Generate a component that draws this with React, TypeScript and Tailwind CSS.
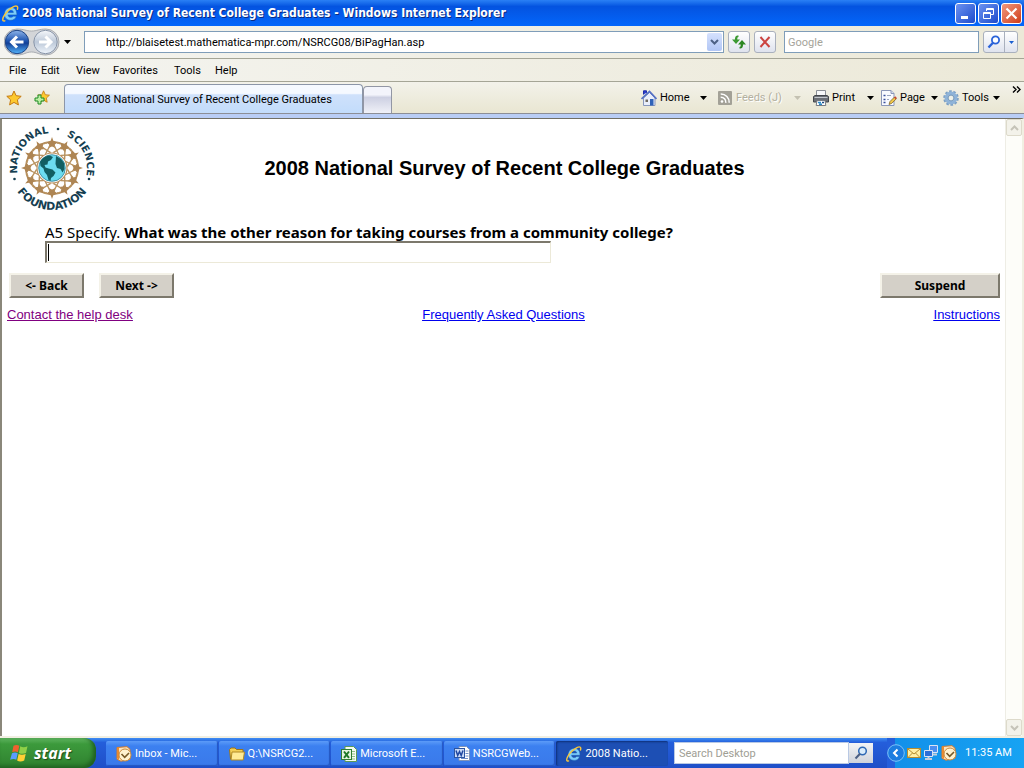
import React from 'react';
import { clsx } from 'clsx';

const menus = [
  { label: 'File', width: 'w-8' },
  { label: 'Edit', width: 'w-[35px]' },
  { label: 'View', width: 'w-[37px]' },
  { label: 'Favorites', width: 'w-[61px]' },
  { label: 'Tools', width: 'w-[41px]' },
  { label: 'Help', width: 'w-10' },
];

const IeLogo = ({ size = 16 }: { size?: number }) => (
  <svg width={size} height={size} viewBox="0 0 16 16" className="shrink-0" aria-hidden="true">
    <path d="M14 9.300H5.600c.2 1.500 1.200 2.300 2.700 2.300 1 0 1.800-.4 2.200-1.100h3c-.7 2.500-2.600 3.900-5.300 3.900-3.600 0-5.900-2.200-5.900-5.800 0-3.700 2.400-6.200 6.100-6.200 3.600 0 5.700 2.400 5.600 6.900zM5.700 7h5c-.1-1.300-1-2-2.400-2-1.400 0-2.300.7-2.600 2z" fill="#7cccfa" stroke="#1c5fae" strokeWidth=".5" />
    <path d="M2.600 14.900C.6 15.600.2 13.800 1.400 11.200 3 7.700 7.500 3 11.400 1.300c2.600-1.100 4 .1 3.100 2.700" fill="none" stroke="#f7c53b" strokeWidth="1.400" strokeLinecap="round" />
  </svg>
);

const Caret = ({ color = '#000' }: { color?: string }) => (
  <svg width="7" height="4" viewBox="0 0 7 4" className="shrink-0" aria-hidden="true">
    <path d="M0 0h7L3.500 4z" fill={color} />
  </svg>
);

const OutlookIcon = () => (
  <svg width="16" height="16" viewBox="0 0 16 16" aria-hidden="true">
    <path d="M1 1.500 11 .7l3 2.500v10l-9 2-4-2z" fill="#fbe3bd" stroke="#d67b28" />
    <path d="M1 1.500h2v12.500l-2-2z" fill="#e98a2f" />
    <circle cx="9" cy="9" r="6" fill="#fff3d0" stroke="#c98a3c" />
    <path d="M5.500 8l3.200 3.300L13 7" fill="none" stroke="#775a28" strokeWidth="1.600" />
  </svg>
);

const FolderIcon = () => (
  <svg width="16" height="16" viewBox="0 0 16 16" aria-hidden="true">
    <path d="M.5 3.500 2 2h4l1.500 1.500h6.500V13H1.500z" fill="#f3cf56" stroke="#9c7418" />
    <path d="M3 6h12.500l-1.300 8H2z" fill="#ffeb95" stroke="#b18a24" />
  </svg>
);

const ExcelIcon = () => (
  <svg width="16" height="16" viewBox="0 0 16 16" aria-hidden="true">
    <path d="M4 .5h8.500l3 3v12H4z" fill="#f4fbf2" stroke="#5d9a56" />
    <path d="M10 5.500h4M10 8h4M10 10.500h4M10 13h4" stroke="#8dbd83" />
    <rect x=".5" y="3.500" width="10" height="10" fill="#e7f5e1" stroke="#2e7d32" />
    <path d="M3 5.500l5 6.300M8 5.500l-5 6.300" stroke="#1f7a28" strokeWidth="2" />
  </svg>
);

const WordIcon = () => (
  <svg width="16" height="16" viewBox="0 0 16 16" aria-hidden="true">
    <path d="M5 .5h7.500l3 3v11H5z" fill="#fff" stroke="#8094b8" />
    <path d="M11.500 5h3M11.500 7.500h3M11.500 10h3M7 12.500h7" stroke="#6d8dc8" />
    <rect x=".5" y="2.500" width="10" height="9" fill="#c9daf8" stroke="#2c55a2" />
    <path d="M2 4.500l1.700 5L5.500 5.500l1.700 4L9 4.500" fill="none" stroke="#1f47a0" strokeWidth="1.500" />
  </svg>
);

const HomeIcon = () => (
  <svg width="16" height="16" viewBox="0 0 16 16" aria-hidden="true">
    <path d="M2.500 8v7.500h11.500V8L8.500 2.500z" fill="#e9eefa" stroke="#8796bc" />
    <path d="M2.500 4.500V.8h3v2" fill="#2a3bd0" stroke="#1d2ca5" />
    <path d="M.5 9 8.500 1.500 15.500 9" fill="none" stroke="#5470c4" strokeWidth="1.700" />
    <path d="M9 9h3.500v6.500H9z" fill="#2f62b8" />
    <path d="M4.500 9.500h2.500V12H4.500z" fill="#6f6a60" />
  </svg>
);

const FeedIcon = () => (
  <svg width="14" height="14" viewBox="0 0 14 14" aria-hidden="true">
    <rect width="14" height="14" rx="1" fill="#a3a197" />
    <circle cx="4" cy="10.500" r="1.300" fill="#fff" />
    <path d="M2.700 6.200a5 5 0 0 1 5.100 5.600M2.700 3a8.300 8.300 0 0 1 8.500 8.800" fill="none" stroke="#fff" strokeWidth="1.500" />
  </svg>
);

const PrintIcon = () => (
  <svg width="16" height="16" viewBox="0 0 16 16" aria-hidden="true">
    <path d="M3.500.5h9V7h-9z" fill="#f7f8fa" stroke="#8b8f96" />
    <path d="M.5 6.500 2 5.500h12l1.500 1V12H.5z" fill="#6c7077" stroke="#43464c" />
    <path d="M1.500 7.500h13" stroke="#c2c6cc" />
    <path d="M4 10.500h8l.8 5H3.200z" fill="#fff" stroke="#777b82" />
    <path d="M5 12.500h3M6 14.300h3" stroke="#2a89c8" strokeWidth="1.500" />
    <path d="M9 12.500h2" stroke="#1c4a84" strokeWidth="1.500" />
  </svg>
);

const PageIcon = () => (
  <svg width="16" height="16" viewBox="0 0 16 16" aria-hidden="true">
    <path d="M.5.500h9.500l3 3v12H.5z" fill="#f8faff" stroke="#8b97b8" />
    <path d="M10 .5v3h3" fill="#d5ddf0" stroke="#8b97b8" />
    <path d="M2.500 5.500h2M2.500 9.500h2M2.500 12.500h2" stroke="#39519c" strokeWidth="1.500" />
    <path d="M6 5.500h4M6 9.500h2" stroke="#9aa5bf" />
    <path d="M8 14.500l1-3L13.500 7l1.800 1.800-4.500 4.500z" fill="#f2c84b" stroke="#7d6528" strokeWidth=".8" />
    <path d="M13 7.400l1.200-1.200 1.700 1.800-1.200 1.200z" fill="#c74636" />
  </svg>
);

const GearIcon = () => (
  <svg width="16" height="16" viewBox="0 0 16 16" aria-hidden="true">
    <circle cx="8" cy="8" r="6.700" fill="none" stroke="#7b9fc4" strokeWidth="2.200" strokeDasharray="2.600 1.610" />
    <circle cx="8" cy="8" r="4.700" fill="none" stroke="#8fb3d8" strokeWidth="3.400" />
    <circle cx="8" cy="8" r="2.900" fill="#eef0e8" stroke="#5e86b1" strokeWidth=".8" />
  </svg>
);

const starPath = 'M8 1l2.100 4.700 5.100.6-3.800 3.500 1 5.100L8 12.400l-4.400 2.500 1-5.100L.8 6.300l5.100-.6z';

const toolbar = [
  { label: 'Home', icon: <HomeIcon />, text: 'w-[37px]', item: 'w-[76px]', off: false },
  { label: 'Feeds (J)', icon: <FeedIcon />, text: 'w-[55px]', item: 'w-24', off: true },
  { label: 'Print', icon: <PrintIcon />, text: 'w-8', item: 'w-[68px]', off: false },
  { label: 'Page', icon: <PageIcon />, text: 'w-7', item: 'w-[62px]', off: false },
  { label: 'Tools', icon: <GearIcon />, text: 'w-7', item: 'w-[65px]', off: false },
];

const tasks = [
  { label: 'Inbox - Mic...', icon: <OutlookIcon />, active: false },
  { label: 'Q:\\NSRCG2...', icon: <FolderIcon />, active: false },
  { label: 'Microsoft E...', icon: <ExcelIcon />, active: false },
  { label: 'NSRCGWeb...', icon: <WordIcon />, active: false },
  { label: '2008 Natio...', icon: <IeLogo />, active: true },
];

const captionButton = 'flex size-[21px] items-center justify-center rounded-[3px] border border-white';
const navButton = 'flex size-[22px] items-center justify-center rounded-[3px] border border-[#a9b0bd] bg-linear-to-b from-white to-[#dfe3ee]';
const surveyButton = 'h-[25px] border-2 border-t-[#f4f2e8] border-l-[#f4f2e8] border-r-[#7c786c] border-b-[#7c786c] bg-[#d4d0c8] font-["Noto_Sans",sans-serif] text-xs leading-5 font-bold';

const TitleBar = () => (
  <header className="flex h-[26px] shrink-0 items-center bg-linear-to-b from-[#2a80f5] via-[#0453e0] via-25% to-[#0366fb] pr-0.5 pl-0.5">
    <IeLogo size={17} />
    <h1 className='ml-[3px] flex-1 truncate font-["DejaVu_Sans_Condensed",sans-serif] text-xs font-bold text-white [text-shadow:1px_1px_0_#0a2a80]'>
      2008 National Survey of Recent College Graduates - Windows Internet Explorer
    </h1>
    <div className="flex gap-0.5">
      <button aria-label="Minimize" className={clsx(captionButton, 'bg-linear-to-br from-[#6d92f0] to-[#1d49cc]')}>
        <svg width="13" height="13" viewBox="0 0 13 13"><path d="M2 9h7v3H2z" fill="#fff" /></svg>
      </button>
      <button aria-label="Restore" className={clsx(captionButton, 'bg-linear-to-br from-[#6d92f0] to-[#1d49cc]')}>
        <svg width="13" height="13" viewBox="0 0 13 13">
          <path d="M4.500 4V1.500h7v6H9M4.500 2.500h7M1.500 5.500h7v6h-7zM1.500 6.500h7" fill="none" stroke="#fff" />
        </svg>
      </button>
      <button aria-label="Close" className={clsx(captionButton, 'bg-linear-to-br from-[#f0977c] to-[#cf3a10]')}>
        <svg width="13" height="13" viewBox="0 0 13 13"><path d="M1.500 1.500l10 10M11.500 1.500l-10 10" stroke="#fff" strokeWidth="2.200" /></svg>
      </button>
    </div>
  </header>
);

const AddressBar = () => (
  <div className="flex h-[33px] shrink-0 items-center border-b border-[#a5a596] bg-linear-to-r from-[#f4f4f0] to-[#ece9d8] pr-1.5 pl-1">
    <svg width="56" height="28" viewBox="0 0 56 28" className="shrink-0" aria-hidden="true">
      <defs>
        <linearGradient id="back" x1="0" y1="0" x2="0" y2="1">
          <stop offset="0" stopColor="#8fb5ea" />
          <stop offset=".45" stopColor="#1f55b0" />
          <stop offset=".55" stopColor="#123f97" />
          <stop offset="1" stopColor="#54b4fb" />
        </linearGradient>
        <linearGradient id="forward" x1="0" y1="0" x2="0" y2="1">
          <stop offset="0" stopColor="#f6f8fb" />
          <stop offset=".5" stopColor="#bcc8d8" />
          <stop offset="1" stopColor="#eef4fb" />
        </linearGradient>
      </defs>
      <path d="M13 1C20 1 22 3 27.500 3S35 1 42 1a13 13 0 0 1 0 26C35 27 33 24 27.500 24S20 27 13 27A13 13 0 0 1 13 1z" fill="#d3d5d8" stroke="#9b9ea4" strokeWidth=".8" />
      <circle cx="13" cy="14" r="11.700" fill="url(#back)" stroke="#1f4484" />
      <circle cx="41.500" cy="14" r="11.700" fill="url(#forward)" stroke="#8794a8" />
      <path d="M13 8.500 7.500 14l5.500 5.500M8 14h11.500" fill="none" stroke="#fff" strokeWidth="3" />
      <path d="M41.500 8.500 47 14l-5.500 5.500M46.500 14H35" fill="none" stroke="#fff" strokeWidth="3" />
    </svg>
    <button aria-label="Recent pages" className="mr-[13px] ml-1"><Caret /></button>
    <div className="flex h-[22px] flex-1 items-center border border-[#7f9db9] bg-white pr-px">
      <input
        aria-label="Address"
        defaultValue="http://blaisetest.mathematica-mpr.com/NSRCG08/BiPagHan.asp"
        className="h-full min-w-0 flex-1 pl-[21px] outline-none"
      />
      <button aria-label="Show addresses" className="flex h-[18px] w-[15px] items-center justify-center rounded-xs bg-linear-to-b from-[#d5e1fd] to-[#b1c6f5]">
        <svg width="9" height="6" viewBox="0 0 9 6"><path d="M1 1l3.500 3.500L8 1" fill="none" stroke="#4d6185" strokeWidth="2" /></svg>
      </button>
    </div>
    <button aria-label="Refresh" className={clsx(navButton, 'ml-1')}>
      <svg width="16" height="16" viewBox="0 0 16 16" className="shrink-0">
        <path d="M7.500 1.500C4.500 1.500 4 3 4 5.500H1l4 4.500 4-4.500H6.300C6.300 3.800 6.500 3 7.500 3z" fill="#3c9a32" />
        <path d="M8.500 14.500c3 0 3.500-1.500 3.500-4h3L11 6 7 10.500h2.700c0 1.700-.2 2.500-1.200 2.500z" fill="#2c8724" />
      </svg>
    </button>
    <button aria-label="Stop" className={clsx(navButton, 'ml-1')}>
      <svg width="12" height="12" viewBox="0 0 12 12"><path d="M1.500 1l9 10M10.500 1l-9 10" stroke="#cc4441" strokeWidth="2" /></svg>
    </button>
    <input aria-label="Search" placeholder="Google" className="ml-2 h-[22px] w-[195px] border border-[#7f9db9] bg-white pl-[3px] outline-none placeholder:text-[#a5a39a]" />
    <div className="ml-1 flex h-[22px] rounded-[3px] border border-[#a9b0bd] bg-linear-to-b from-white to-[#dfe3ee]">
      <button aria-label="Run search" className="flex w-5 items-center justify-center">
        <svg width="14" height="14" viewBox="0 0 14 14">
          <circle cx="8.500" cy="5" r="3.600" fill="#fff" stroke="#2b63d9" strokeWidth="1.800" />
          <path d="M6 7.700 1.500 12.500" stroke="#2b63d9" strokeWidth="2.400" />
        </svg>
      </button>
      <button aria-label="Search options" className="flex w-[13px] items-center justify-center border-l border-[#a9b0bd]">
        <svg width="5" height="3" viewBox="0 0 5 3"><path d="M0 0h5L2.500 3z" fill="#1a5fd0" /></svg>
      </button>
    </div>
  </div>
);

const MenuBar = () => (
  <nav className="flex h-[23px] shrink-0 items-center border-b border-[#a5a596] bg-linear-to-r from-[#f4f4f0] to-[#ece9d8] pt-0.5 pl-[9px]">
    {menus.map((menu) => (
      <button key={menu.label} className={clsx('text-left', menu.width)}>{menu.label}</button>
    ))}
  </nav>
);

const TabBar = () => (
  <div className="flex h-8 shrink-0 items-end border-b border-[#8c8e96] bg-linear-to-b from-[#f3f2ea] to-[#e9e6d2]">
    <div className="flex h-full flex-1 items-end">
      <button aria-label="Favorites Center" className="self-center pl-1.5">
        <svg width="16" height="16" viewBox="0 0 16 16"><path d={starPath} fill="#fdc92f" stroke="#c57a12" /></svg>
      </button>
      <button aria-label="Add to Favorites" className="self-center pl-3">
        <svg width="16" height="16" viewBox="0 0 16 16">
          <g transform="translate(3 0) scale(.82)"><path d={starPath} fill="#fdc92f" stroke="#c57a12" /></g>
          <path d="M4 5h3v3h3v3H7v3H4v-3H1V8h3z" fill="#bdf0a4" stroke="#1d8a22" />
        </svg>
      </button>
      <button className="ml-3.5 h-[29px] w-[299px] rounded-t-[4px] border border-b-0 border-[#8c96a8] bg-linear-to-b from-[#f5f9ff] from-30% via-[#cfe1fb] via-35% to-[#c2dcfb] pt-0.5 pl-[21px] text-left">
        2008 National Survey of Recent College Graduates
      </button>
      <button aria-label="New Tab" className="h-[27px] w-[29px] rounded-t-[4px] border border-b-0 border-[#9296a4] bg-linear-to-b from-[#f3f4fb] from-30% via-[#cdd0e2] via-40% to-[#f0f1f8]" />
    </div>
    <div className="flex h-full items-center">
      {toolbar.map((tool) => (
        <button key={tool.label} disabled={tool.off} className={clsx('flex items-center gap-[3px]', tool.item, tool.off && 'text-[#b3b09f] [text-shadow:1px_1px_0_#fff]')}>
          <span className="flex w-4 shrink-0 justify-center">{tool.icon}</span>
          <span className={clsx('shrink-0 text-left whitespace-nowrap', tool.text)}>{tool.label}</span>
          <Caret color={tool.off ? '#c4c1b2' : '#000'} />
        </button>
      ))}
    </div>
    <button aria-label="More commands" className="mr-[3px] ml-1 flex h-full items-start pt-1">
      <svg width="9" height="7" viewBox="0 0 9 7"><path d="M1 .5l3 3-3 3M5 .5l3 3-3 3" fill="none" stroke="#000" strokeWidth="1.400" /></svg>
    </button>
  </div>
);

// figures holding hands around the globe
const figures = Array.from({ length: 12 }, (_, i) => i * 30);

const NsfSeal = () => (
  <svg width="86" height="86" viewBox="0 0 86 86" className='shrink-0 overflow-visible font-["DejaVu_Sans",sans-serif] font-bold' role="img" aria-label="National Science Foundation">
    <defs>
      <path id="leftArc" d="M11.500 58.200A35 35 0 0 1 43 8" />
      <path id="rightArc" d="M43 8A35 35 0 0 1 74.500 58.200" />
      <path id="bottomArc" d="M1 43A42 42 0 0 0 85 43" />
    </defs>
    {figures.map((angle) => (
      <g key={angle} transform={`rotate(${angle} 43 43)`}>
        <path d="M43 12l1.300 3.700 5.200 1.300-3.700 2.400.7 3.600L43 21.500 39.500 23l.7-3.600-3.700-2.400 5.200-1.300z" fill="#ae8553" />
        <path d="M41 20.500 36.500 29M45 20.500 49.500 29M37.500 17l-2.500 2M48.500 17l2.500 2" stroke="#b8925f" strokeWidth="1.400" />
      </g>
    ))}
    <circle cx="43" cy="43" r="15" fill="#fff" stroke="#b78d5c" strokeWidth="1.200" />
    <circle cx="43" cy="43" r="13.300" fill="#6cdcf0" stroke="#2f7f94" strokeWidth=".8" />
    <path d="M31 37c2-4 6-6.500 10-6.500l3 1.500-2 3-3 1.500-.5 3-3 .5 1 2.500 3 1 4 1 3 3-2 3.500-2.500 2-.5 3-2-1-1.500-5-2.500-3-1-3.500-3-2.500z" fill="#125e62" />
    <path d="M47 31l5 3 3 4 .5 6-2 3.500-2-3.500-3.500-1-1.500-4z" fill="#125e62" />
    <g fontSize="10" fill="#163f52" textAnchor="middle">
      <text><textPath href="#leftArc" startOffset="55%">NATIONAL</textPath></text>
      <text><textPath href="#rightArc" startOffset="55%">SCIENCE</textPath></text>
      <text fontSize="11"><textPath href="#bottomArc" startOffset="50%">FOUNDATION</textPath></text>
    </g>
    <g fill="#163f52">
      <circle cx="49" cy="4" r="1.300" />
      <circle cx="5.500" cy="54" r="1.300" />
      <circle cx="80" cy="54" r="1.300" />
    </g>
  </svg>
);

const SurveyPage = () => (
  <main className='flex-1 bg-white pt-1.5 pr-[5px] pl-[5px] font-["Liberation_Sans",sans-serif] text-[13px] text-black'>
    <div className="grid grid-cols-[86px_1fr_86px] items-center pl-0.5">
      <NsfSeal />
      <h2 className="text-center text-xl font-bold">2008 National Survey of Recent College Graduates</h2>
    </div>
    <div className='pt-3 pl-[38px] font-["Noto_Sans",sans-serif]'>
      <label htmlFor="reason" className="block text-[15px] leading-[18px]">
        A5 Specify. <b>What was the other reason for taking courses from a community college?</b>
      </label>
      <div className="relative max-w-[506px]">
        <input id="reason" className="block h-[22px] w-full border border-t-2 border-l-2 border-t-[#7c786c] border-r-[#ece9d8] border-b-[#ece9d8] border-l-[#7c786c] px-px outline-none" />
        <span className="absolute top-[3px] left-[3px] h-[17px] w-px bg-black" />
      </div>
    </div>
    <div className="mt-2.5 flex gap-[15px] pl-0.5">
      <button className={clsx(surveyButton, 'w-[75px]')}>&lt;- Back</button>
      <button className={clsx(surveyButton, 'w-[75px]')}>Next -&gt;</button>
      <button className={clsx(surveyButton, 'ml-auto w-[120px]')}>Suspend</button>
    </div>
    <div className="mt-[7px] grid grid-cols-3 leading-5 text-[#0000ee] underline">
      <a href="#help" className="justify-self-start text-[#800080]">Contact the help desk</a>
      <a href="#faq" className="justify-self-center">Frequently Asked Questions</a>
      <a href="#instructions" className="justify-self-end">Instructions</a>
    </div>
  </main>
);

const scrollButton = 'flex h-[17px] w-4 items-center justify-center rounded-xs border border-[#dddacb] bg-[#f3f2ea]';

const ScrollBar = () => (
  <div className="flex w-[17px] shrink-0 flex-col justify-between border-l border-[#eeede5] bg-[#fdfdf9]">
    <button aria-label="Scroll up" className={scrollButton}>
      <svg width="9" height="6" viewBox="0 0 9 6"><path d="M1 5l3.500-3.500L8 5" fill="none" stroke="#c5c3b8" strokeWidth="2" /></svg>
    </button>
    <button aria-label="Scroll down" className={scrollButton}>
      <svg width="9" height="6" viewBox="0 0 9 6"><path d="M1 1l3.500 3.500L8 1" fill="none" stroke="#c5c3b8" strokeWidth="2" /></svg>
    </button>
  </div>
);

const TaskBar = () => (
  <footer className="flex h-[30px] shrink-0 items-stretch bg-linear-to-b from-[#3f8cf3] via-[#245edb] via-15% to-[#1f4fc8] text-white">
    <button className='flex w-24 items-center rounded-r-xl bg-linear-to-b from-[#5fb560] via-[#3c9a3c] via-20% to-[#2f812f] pl-2.5 font-["Open_Sans",sans-serif] text-base leading-none font-bold italic shadow-[inset_-3px_-2px_4px_#1f5f20] [text-shadow:1px_1px_1px_#1c4a1c]'>
      <svg width="20" height="18" viewBox="0 0 20 18" className="mr-1" aria-hidden="true">
        <path d="M3.500 1.800C5.500.6 7.500.6 9.300 1.800L7.900 8.300C6 7.200 4.200 7.300 2.200 8.300z" fill="#f0602f" />
        <path d="M10.300 2.300c2 1.200 4.500 1.200 7.200 0L16 9c-2.500 1.100-5 1-7.100-.1z" fill="#8fd048" />
        <path d="M2 9.300c2-1 3.900-1 5.700 0l-1.400 6.500c-1.900-1.100-3.900-1-6.200 0z" fill="#5a9cff" />
        <path d="M8.600 9.900c2 1.100 4.600 1.100 7.100 0l-1.500 6.700c-2.500 1.200-5.100 1.200-7.100 0z" fill="#ffd035" />
      </svg>
      start
    </button>
    <div className="ml-2.5 flex flex-1 gap-px pt-[3px] pb-[2px]">
      {tasks.map((task) => (
        <button
          key={task.label}
          className={clsx(
            'flex flex-1 items-center gap-[3px] rounded-[2px] pl-2.5 whitespace-nowrap',
            task.active
              ? 'bg-[#1d4fb4] shadow-[inset_1px_1px_2px_#0e3078]'
              : 'bg-linear-to-b from-[#5c9bf8] via-[#3c80f0] via-20% to-[#3a79ea] shadow-[inset_-1px_-1px_1px_#2456c0]',
          )}
        >
          {task.icon}
          {task.label}
        </button>
      ))}
    </div>
    <div className="mr-3.5 ml-1.5 flex items-center">
      <input aria-label="Search Desktop" placeholder="Search Desktop" className="h-[22px] w-[175px] border border-[#b9c9e4] bg-white pl-1 text-black outline-none placeholder:text-[#a09e94]" />
      <button aria-label="Search" className="flex h-5 w-6 items-center justify-center bg-linear-to-b from-[#f3f4f6] to-[#cfd3db]">
        <svg width="14" height="14" viewBox="0 0 14 14">
          <circle cx="8.500" cy="5" r="3.800" fill="#d9ecfb" stroke="#2f69b5" strokeWidth="1.500" />
          <path d="M6 7.700 1.500 12.500" stroke="#4b5f83" strokeWidth="2" />
        </svg>
      </button>
    </div>
    <div className="flex w-[137px] items-center bg-linear-to-r from-[#245edb] from-6% via-[#1290e9] via-6% to-[#17a3f3]">
      <button aria-label="Show hidden icons">
        <svg width="18" height="18" viewBox="0 0 18 18">
          <circle cx="9" cy="9" r="8.300" fill="#1c7de0" stroke="#7cc2f8" />
          <path d="M10.500 5.500 7 9l3.500 3.500" fill="none" stroke="#fff" strokeWidth="2" />
        </svg>
      </button>
      <div className="ml-0.5 flex items-center gap-0.5">
        <svg width="14" height="12" viewBox="0 0 14 12" aria-label="Mail">
          <rect x=".5" y="1.500" width="13" height="9" fill="#fff0a5" stroke="#b58c2f" />
          <path d="M1 2l6 5 6-5M1 10.500l4.500-4.500M13 10.500L8.500 6" fill="none" stroke="#b58c2f" />
        </svg>
        <svg width="16" height="16" viewBox="0 0 16 16" aria-label="Network">
          <path d="M6.500.5h8v7h-8z" fill="#4c8ff0" stroke="#dbe4f4" />
          <path d="M8 9.500h6" stroke="#c7cedb" strokeWidth="2" />
          <path d="M1.500 5.500h8v6h-8z" fill="#2d6fd8" stroke="#dbe4f4" />
          <path d="M2 14h7M5.500 12v2" stroke="#c7cedb" strokeWidth="2" />
        </svg>
        <OutlookIcon />
      </div>
      <time className="ml-2 whitespace-nowrap">11:35 AM</time>
    </div>
  </footer>
);

export default function App() {
  return (
    <div className='flex min-h-screen flex-col bg-[#ece9d8] font-["Roboto",sans-serif] text-[11px] leading-4 text-black'>
      <TitleBar />
      <AddressBar />
      <MenuBar />
      <TabBar />
      <div className="h-1 shrink-0 bg-[#b9cdf5]" />
      <div className="flex flex-1 border-t border-r-2 border-l-2 border-t-[#716f64] border-r-[#f1efe2] border-l-[#8a877a]">
        <SurveyPage />
        <ScrollBar />
      </div>
      <div className="h-0.5 shrink-0 bg-[#f1efe2]" />
      <TaskBar />
    </div>
  );
}
